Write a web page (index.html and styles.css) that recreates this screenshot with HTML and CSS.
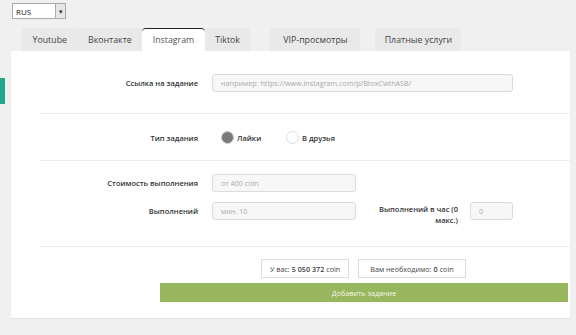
FILE: index.html
```html
<html>
<link rel="stylesheet" href="styles.css">

<head>
  <title>Новое задание</title>
</head>

<body>
  <div class="side-tab"></div>

  <div class="top">
    <div class="lang">
      <span>RUS</span>
      <span class="lang-arrow">&#9662;</span>
    </div>
  </div>

  <div class="tabs">
    <div class="tab">Youtube</div>
    <div class="tab">Вконтакте</div>
    <div class="tab active">Instagram</div>
    <div class="tab">Tiktok</div>
    <div class="tab wide tab-vip">VIP-просмотры</div>
    <div class="tab wide tab-paid">Платные услуги</div>
  </div>

  <div class="panel">
    <!-- ссылка -->
    <div class="section first">
      <div class="row">
        <div class="label">Ссылка на задание</div>
        <div class="field link-field">например: https://www.instagram.com/p/BtoxCwthASB/</div>
      </div>
    </div>

    <!-- тип задания -->
    <div class="section type">
      <div class="row">
        <div class="label">Тип задания</div>
        <div class="radio checked"></div>
        <div class="radio-text">Лайки</div>
        <div class="radio"></div>
        <div class="radio-text">В друзья</div>
      </div>
    </div>

    <!-- стоимость -->
    <div class="section cost">
      <div class="row">
        <div class="label">Стоимость выполнения</div>
        <div class="field small-field">от 400 coin</div>
      </div>
      <div class="row row2">
        <div class="label">Выполнений</div>
        <div class="field small-field">мин. 10</div>
        <div class="label per-hour">Выполнений в час (0 макс.)</div>
        <div class="field tiny-field">0</div>
      </div>
    </div>

    <!-- итог -->
    <div class="footer">
      <div class="totals">
        <div class="total">У вас: <b>5 050 372</b> coin</div>
        <div class="total need">Вам необходимо: <b>0</b> coin</div>
      </div>
      <div class="submit">Добавить задание</div>
    </div>
  </div>
</body>

</html>
```

FILE: styles.css
```css
body {
  margin: 0;
  background-color: #f0f0f0;
  font-family: "Open Sans", sans-serif;
  color: #333;
}

.side-tab {
  position: absolute;
  left: 0;
  top: 78px;
  width: 5px;
  height: 26px;
  background-color: #1fa88c;
}

.top {
  padding: 3px 0 0 12px;
  height: 25px;
}

.lang {
  width: 54px;
  height: 16px;
  border: 1px solid #a9a9a9;
  background-color: white;
  display: flex;
  align-items: center;
  justify-content: space-between;
  font-size: 8px;
  color: #222;
  box-sizing: border-box;
  padding-left: 3px;
}

.lang-arrow {
  width: 9px;
  height: 14px;
  border-left: 1px solid #a9a9a9;
  background-color: #e6e6e6;
  font-size: 7px;
  display: flex;
  align-items: center;
  justify-content: center;
  color: #333;
}

.tabs {
  display: flex;
  margin-left: 22px;
  height: 23px;
}

.tab {
  background-color: #e9e9e9;
  border-radius: 4px 4px 0 0;
  padding: 0 10.5px;
  font-size: 8.8px;
  color: #444;
  display: flex;
  align-items: center;
  justify-content: center;
  white-space: nowrap;
}

.tab.active {
  background-color: white;
  border-top: 1px solid #222;
  color: #555;
}

.tab.wide {
  padding: 0;
}

.tab-vip {
  margin-left: 20px;
  width: 90px;
}

.tab-paid {
  margin-left: 15px;
  width: 86px;
}

.panel {
  margin: 0 6px 0 11px;
  background-color: white;
  height: 267px;
  border-bottom: 1px solid #e2e2e2;
}

.section {
  margin-left: 29px;
  border-bottom: 1px solid #eeeeee;
}

.section.first {
  padding: 23px 0 21px 0;
}

.section.type {
  padding: 17px 0 16px 0;
}

.section.cost {
  padding: 13px 0 26px 0;
}

.row {
  display: flex;
  align-items: center;
}

.row2 {
  margin-top: 10px;
  height: 18px;
}

.label {
  width: 158px;
  text-align: right;
  padding-right: 14px;
  font-size: 7.5px;
  font-weight: 600;
  color: #333;
}

.field {
  height: 18px;
  box-sizing: border-box;
  border: 1px solid #dcdcdc;
  border-radius: 3px;
  background-color: #f7f7f7;
  font-size: 7.2px;
  color: #aaa;
  display: flex;
  align-items: center;
  padding-left: 8px;
}

.link-field {
  width: 301px;
}

.small-field {
  width: 144px;
}

.tiny-field {
  width: 43px;
}

.per-hour {
  width: 84px;
  padding-right: 12px;
  margin-left: 18px;
  align-self: flex-start;
  margin-top: 2px;
  text-align: right;
  line-height: 11px;
}

.radio {
  width: 11px;
  height: 11px;
  border-radius: 50%;
  border: 1px solid #ddd;
  background-color: white;
  margin-left: 9px;
}

.radio.checked {
  background-color: #7a7a7a;
  border-color: #cfcfcf;
}

.radio-text {
  font-size: 7.5px;
  font-weight: 600;
  color: #333;
  margin-left: 3px;
  width: 40px;
}

.footer {
  padding-top: 12px;
}

.totals {
  display: flex;
  margin-left: 250px;
  gap: 9px;
}

.total {
  height: 19px;
  box-sizing: border-box;
  border: 1px solid #dcdcdc;
  font-size: 7.2px;
  color: #444;
  display: flex;
  align-items: center;
  padding: 0 8px;
}

.total.need {
  padding: 0 11px;
}

.total b {
  font-weight: 600;
  margin: 0 2px;
}

.submit {
  margin: 5px 2px 0 149px;
  height: 19px;
  background-color: #97b65e;
  color: #f4f8ec;
  font-size: 7.2px;
  display: flex;
  align-items: center;
  justify-content: center;
}
```
